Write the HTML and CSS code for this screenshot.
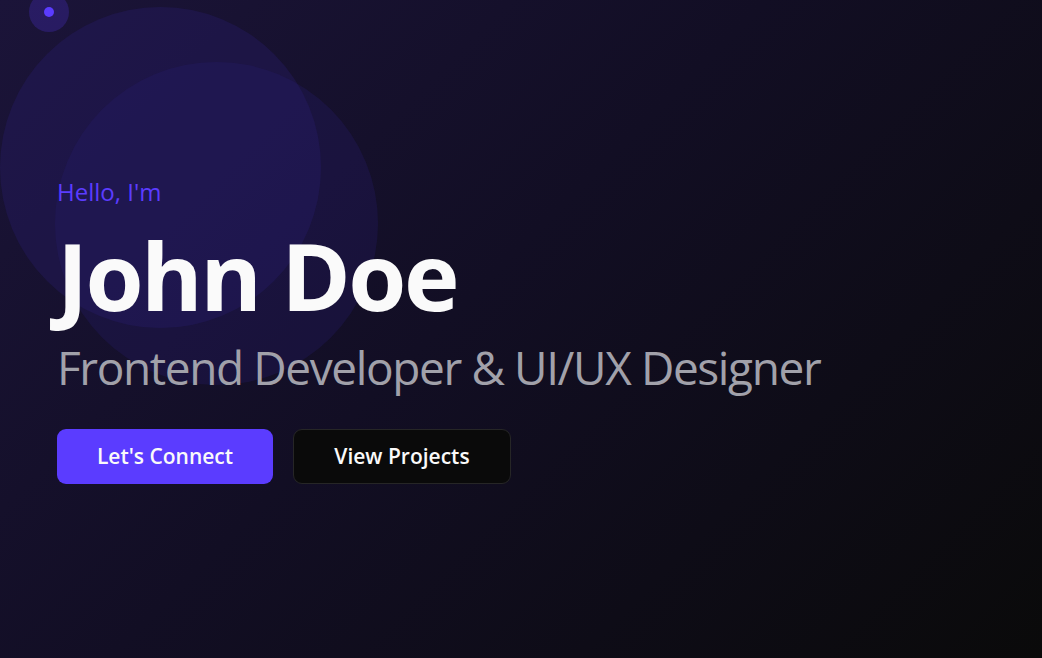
FILE: index.html
```html
<!DOCTYPE html>
<html lang="en">
<head>
<meta charset="utf-8">
<title>John Doe</title>
<link rel="stylesheet" href="styles.css">
</head>
<body>
<section class="hero">
  <div class="blob blob-one"></div>
  <div class="blob blob-two"></div>
  <div class="cursor-ring"><div class="cursor-dot"></div></div>
  <div class="hero-content">
    <p class="greeting">Hello, I'm</p>
    <h1 class="name">John Doe</h1>
    <p class="role">Frontend Developer &amp; UI/UX Designer</p>
    <div class="actions">
      <a class="btn btn-primary" href="#contact">Let's Connect</a>
      <a class="btn btn-secondary" href="#projects">View Projects</a>
    </div>
  </div>
</section>
</body>
</html>
```
FILE: styles.css
```css
* { box-sizing: border-box; }
html, body { margin: 0; padding: 0; }
body {
  font-family: "Open Sans", "Noto Sans", "Liberation Sans", sans-serif;
  background: #0a0a0a;
  color: #fafafa;
}
.hero {
  position: relative;
  overflow: hidden;
  height: 658px;
  display: flex;
  align-items: center;
  padding-left: 57px;
  background: linear-gradient(135deg, #1b1439 0%, #120e24 45%, #0a0a0a 100%);
}
.blob {
  position: absolute;
  border-radius: 50%;
}
.blob-one {
  left: 0; top: 7px;
  width: 321px; height: 321px;
  background: rgba(40, 28, 110, 0.35);
}
.blob-two {
  left: 55px; top: 62px;
  width: 323px; height: 323px;
  background: rgba(40, 28, 110, 0.28);
}
.cursor-ring {
  position: absolute;
  left: 29px; top: -8px;
  width: 40px; height: 40px;
  border-radius: 50%;
  background: rgba(91, 60, 255, 0.22);
  display: flex;
  align-items: center;
  justify-content: center;
}
.cursor-dot {
  width: 10px; height: 10px;
  border-radius: 50%;
  background: #5b3cff;
}
.hero-content {
  position: relative;
  display: flex;
  flex-direction: column;
  align-items: flex-start;
  margin-top: 1px;
}
.greeting {
  margin: 0;
  font-size: 24px;
  line-height: 32px;
  color: #5b3cff;
}
.name {
  margin: 12px 0 0;
  font-size: 94px;
  line-height: 110px;
  font-weight: 700;
  letter-spacing: -2.6px;
  color: #fafafa;
}
.role {
  margin: 9px 0 0;
  font-size: 46px;
  line-height: 56px;
  font-weight: 400;
  letter-spacing: -1.4px;
  color: #a1a1aa;
}
.actions {
  display: flex;
  gap: 20px;
  margin-top: 34px;
}
.btn {
  display: flex;
  align-items: center;
  justify-content: center;
  height: 55px;
  border-radius: 9px;
  font-size: 21px;
  font-weight: 600;
  color: #fafafa;
  text-decoration: none;
}
.btn-primary {
  width: 216px;
  background: #5b3cff;
}
.btn-secondary {
  width: 218px;
  background: #0a0a0a;
  border: 1px solid #262626;
}
```
